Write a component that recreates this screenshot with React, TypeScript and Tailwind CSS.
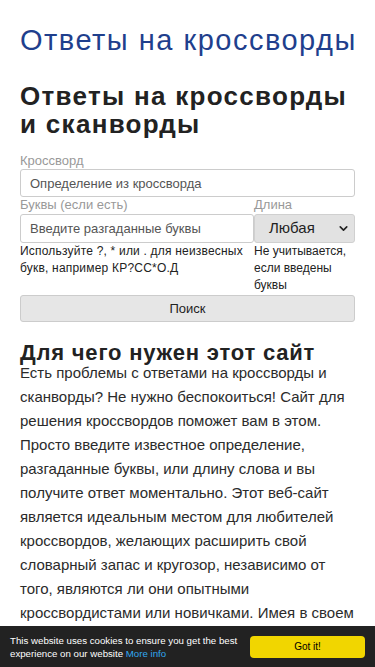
import { ChevronDown } from 'lucide-react';

const about =
  'Есть проблемы с ответами на кроссворды и сканворды? Не нужно беспокоиться! Сайт для решения кроссвордов поможет вам в этом. Просто введите известное определение, разгаданные буквы, или длину слова и вы получите ответ моментально. Этот веб-сайт является идеальным местом для любителей кроссвордов, желающих расширить свой словарный запас и кругозор, независимо от того, являются ли они опытными кроссвордистами или новичками. Имея в своем распоряжении сайт для решения кроссвордов, разгадывание различных головоломок станет намного проще и приятнее.';

export default function App() {
  return (
    <div className="min-h-screen bg-white font-['Liberation_Sans',Arial,sans-serif] text-[#222]">
      <header className="px-5 pt-[23px]">
        <a className="block whitespace-nowrap text-[29px] leading-[34px] text-[#1f3f8d] tracking-[1.5px]">Ответы на кроссворды</a>
      </header>

      <main className="px-5 pt-[25px] pb-24">
        <h1 className="text-[26px] leading-[28px] font-bold tracking-[1.3px] text-[#222]">Ответы на кроссворды и сканворды</h1>

        <form className="mt-[15px]" onSubmit={(e) => e.preventDefault()}>
          <label className="block text-[13px] leading-[16px] text-[#999]">Кроссворд</label>
          <input
            className="w-full h-[28px] rounded-[3px] border border-[#ccc] px-[9px] text-[13px] text-[#333] placeholder:text-[#555] outline-none"
            placeholder="Определение из кроссворда"
          />

          <div className="flex">
            <div className="flex-1 min-w-0">
              <label className="block text-[13px] leading-[16px] text-[#999]">Буквы (если есть)</label>
              <input
                className="mt-px w-full h-[29px] rounded-[3px] border border-[#ccc] px-[9px] text-[13px] text-[#333] placeholder:text-[#555] outline-none"
                placeholder="Введите разгаданные буквы"
              />
              <p className="pr-2 text-[12px] leading-[17px] tracking-[0.2px] text-[#222]">
                Используйте ?, * или . для неизвесных букв, например КР?СС*О.Д
              </p>
            </div>
            <div className="w-[101px] shrink-0">
              <label className="block text-[13px] leading-[16px] text-[#999]">Длина</label>
              <div className="mt-px h-[29px] rounded-[3px] border border-[#d0d0d0] bg-[#e2e2e2] flex items-center pl-[14px] pr-[4px]">
                <span className="flex-1 text-[15px] text-[#222]">Любая</span>
                <ChevronDown className="w-[13px] h-[13px] text-[#222]" strokeWidth={3} />
              </div>
              <p className="text-[12px] leading-[17px] text-[#222]">
                Не учитывается, если введены буквы
              </p>
            </div>
          </div>

          <button
            type="submit"
            className="mt-px w-full h-[27px] rounded-[3px] border border-[#ccc] bg-[#e6e6e6] text-[13px] text-[#222]"
          >
            Поиск
          </button>
        </form>

        <h2 className="mt-[19px] text-[22px] leading-[24px] font-bold tracking-[0.8px] text-[#222]">Для чего нужен этот сайт</h2>
        <p className="-mt-[4px] text-[15px] leading-[24px] text-[#2b2b2b]">{about}</p>
      </main>

      <div className="fixed bottom-0 left-0 right-0 h-[41px] bg-[#222] flex items-center pl-[10px] pr-[10px]">
        <p className="w-[234px] text-[9.7px] leading-[13px] text-white">
          This website uses cookies to ensure you get the best experience on our website{' '}
          <a className="text-[#31a8f0]">More info</a>
        </p>
        <button className="ml-auto w-[115px] h-[22px] rounded-[4px] bg-[#f1d600] text-[10px] text-black">Got it!</button>
      </div>
    </div>
  );
}
